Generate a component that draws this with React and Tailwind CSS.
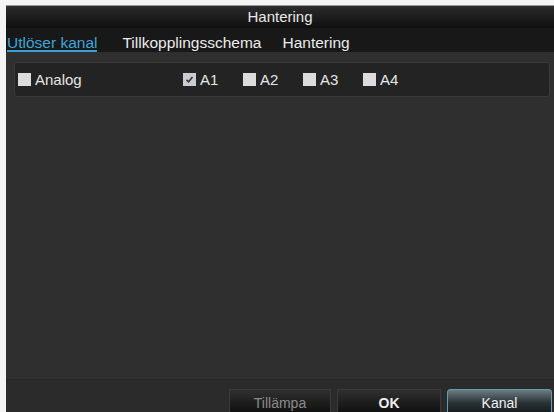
import React from 'react';

const font = { fontFamily: '"Liberation Sans", Arial, sans-serif' };

function Box({ checked }) {
  return (
    <span className={`flex h-[13px] w-[13px] items-center justify-center ${checked ? 'bg-[#c9ccd0]' : 'bg-[#dcdcdc]'}`}>
      {checked && (
        <svg width="9" height="9" viewBox="0 0 9 9">
          <path d="M1.5 4.8 L3.6 6.8 L7.5 2" stroke="#333" strokeWidth="1.6" fill="none" />
        </svg>
      )}
    </span>
  );
}

function Check({ label, checked, className }) {
  return (
    <div className={`flex items-center gap-[4px] ${className}`}>
      <Box checked={checked} />
      <span className="text-[15px] leading-[17px] text-[#e6e6e6]">{label}</span>
    </div>
  );
}

export default function App() {
  return (
    <div className="h-[412px] w-[554px] overflow-hidden bg-[#f4f4f4] pl-[6px] pt-[5px]" style={font}>
      <div className="flex h-full flex-col border-t border-[#9a9a9a] bg-[#2f2f2f]">
        {/* title */}
        <div className="flex h-[22px] items-center justify-center bg-gradient-to-b from-[#2c2c2c] to-[#0f0f0f] text-[15px] text-[#e8e8e8]">
          Hantering
        </div>

        {/* tabs */}
        <div className="flex h-[24px] bg-[#181818] pl-[1px] pt-[7px] text-[15.5px]">
          <span className="h-[17px] border-b-2 border-[#3a9fd4] leading-[15px] text-[#3ea6da]">Utlöser kanal</span>
          <span className="ml-[25px] leading-[15px] text-[#ececec]">Tillkopplingsschema</span>
          <span className="ml-[21px] leading-[15px] text-[#ececec]">Hantering</span>
        </div>

        {/* body */}
        <div className="flex-1 pl-[8px] pr-[4px] pt-[10px]">
          <div className="flex h-[35px] items-center rounded-[3px] border border-[#3a3a3a] bg-[#232323] pl-[3px]">
            <Check label="Analog" className="w-[165px]" />
            <Check label="A1" checked className="w-[60px]" />
            <Check label="A2" className="w-[60px]" />
            <Check label="A3" className="w-[60px]" />
            <Check label="A4" className="w-[60px]" />
          </div>
        </div>

        {/* bottom bar */}
        <div className="flex h-[33px] justify-end gap-[6px] overflow-hidden border-t border-[#262626] bg-[#2b2b2b] pr-[2px] pt-[9px] text-[14px]">
          <button className="h-[28px] w-[102px] border border-[#3a3a3a] bg-gradient-to-b from-[#303030] to-[#0c0c0c] text-[#8c8c8c]">
            Tillämpa
          </button>
          <button className="h-[28px] w-[104px] border border-[#3a3a3a] bg-gradient-to-b from-[#303030] to-[#0c0c0c] font-bold text-[#eeeeee]">
            OK
          </button>
          <button className="h-[28px] w-[105px] rounded-t-[3px] border border-[#5d9fae] bg-gradient-to-b from-[#6d7d84] via-[#2a3236] to-[#101416] text-[#f0f0f0]">
            Kanal
          </button>
        </div>
      </div>
    </div>
  );
}
